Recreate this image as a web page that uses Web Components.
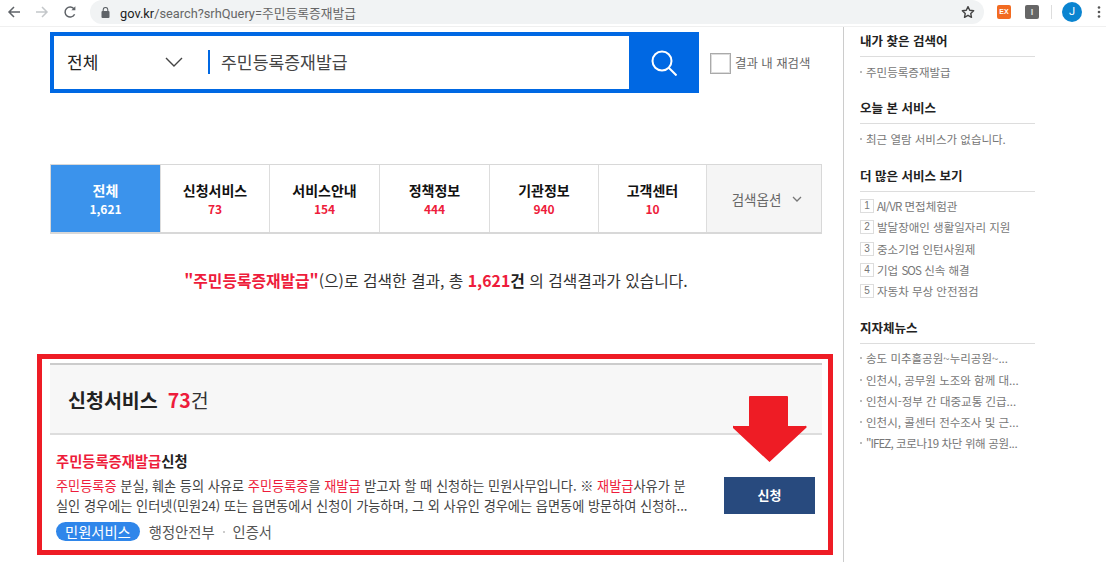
<!DOCTYPE html>
<html lang="ko">
<head>
<meta charset="utf-8">
<title>gov.kr search</title>
<style>
    html, body { margin: 0; padding: 0; height: 100%; background: #fff; overflow: hidden; }
    body { font-family: "Noto Sans CJK KR", "Noto Sans", sans-serif; color: #222; }
    .page { display: flex; align-items: flex-start; }
    .tight { letter-spacing: -0.9px; }
    .snug { letter-spacing: -0.35px; }
</style>
</head>
<body>
<browser-bar url-host="gov.kr" url-path="/search?srhQuery=주민등록증재발급"></browser-bar>
<div class="page">
    <main-column>
        <search-box query="주민등록증재발급" scope="전체"></search-box>
        <result-tabs></result-tabs>
        <result-summary></result-summary>
        <service-result></service-result>
    </main-column>
    <side-column>
        <side-section heading="내가 찾은 검색어"><side-item>주민등록증재발급</side-item></side-section>
        <side-section heading="오늘 본 서비스"><side-item>최근 열람 서비스가 없습니다.</side-item></side-section>
        <side-section heading="더 많은 서비스 보기">
            <side-item num="1"><span class="tight">AI/VR</span> 면접체험관</side-item>
            <side-item num="2">발달장애인 생활일자리 지원</side-item>
            <side-item num="3">중소기업 인턴사원제</side-item>
            <side-item num="4">기업 <span class="tight">SOS</span> 신속 해결</side-item>
            <side-item num="5">자동차 무상 안전점검</side-item>
        </side-section>
        <side-section heading="지자체뉴스">
            <side-item>송도 미추홀공원~누리공원~...</side-item>
            <side-item>인천시, 공무원 노조와 함께 대...</side-item>
            <side-item>인천시-정부 간 대중교통 긴급...</side-item>
            <side-item>인천시, 콜센터 전수조사 및 근...</side-item>
            <side-item><span class="tight">"IFEZ,</span> <span class="snug">코로나19 차단 위해 공원...</span></side-item>
        </side-section>
    </side-column>
</div>

<script>
const FONT = '"Noto Sans CJK KR", "Noto Sans", sans-serif';

class BrowserBar extends HTMLElement {
    connectedCallback() {
        this.attachShadow({ mode: 'open' });
        this.shadowRoot.innerHTML = `
            <style>
                :host { display: flex; align-items: flex-start; height: 27px; background: #fff; border-bottom: 1px solid #f0f0f0; box-sizing: border-box; }
                svg { display: block; flex: none; }
                .nav { display: flex; align-items: center; height: 24px; padding-left: 7px; gap: 14px; width: 90px; flex: none; box-sizing: border-box; }
                .pill { flex: none; width: 894px; height: 24px; background: #f1f3f4; border-radius: 12px; display: flex; align-items: center; padding-left: 11px; box-sizing: border-box; font: 12.8px "Roboto", "Noto Sans CJK KR", sans-serif; color: #666; }
                .pill b { font-weight: 400; color: #222; }
                .pill svg { margin-right: 10px; }
                .pill .star { margin-left: auto; margin-right: 9px; }
                .tools { display: flex; align-items: center; height: 24px; padding-left: 13px; }
                .ex { width: 14px; height: 14px; border-radius: 2px; background: #f26b21; color: #fff; font: bold 7px/14px "Liberation Sans", sans-serif; text-align: center; }
                .i { width: 14px; height: 14px; border-radius: 2px; background: #666; color: #ddd; font: bold 9px/14px "Liberation Sans", sans-serif; text-align: center; margin-left: 14px; }
                .sep { width: 1px; height: 14px; background: #ddd; margin-left: 12px; }
                .j { width: 20px; height: 20px; border-radius: 50%; background: #0a84d0; color: #fff; font: 11px/20px "Roboto", sans-serif; text-align: center; margin-left: 10px; }
                .dots { margin-left: 15px; }
            </style>
            <div class="nav">
                <svg width="14" height="14" viewBox="0 0 14 14" fill="none" stroke="#5f6368" stroke-width="1.5"><path d="M13 7H2M7 2 2 7l5 5"/></svg>
                <svg width="14" height="14" viewBox="0 0 14 14" fill="none" stroke="#c4c7ca" stroke-width="1.5"><path d="M1 7h11M7 2l5 5-5 5"/></svg>
                <svg width="14" height="14" viewBox="0 0 14 14" fill="none" stroke="#5f6368" stroke-width="1.5"><path d="M11.6 9.2A5 5 0 1 1 11.2 4.2"/><path d="M12.4 1.2v4h-4z" fill="#5f6368" stroke="none"/></svg>
            </div>
            <div class="pill">
                <svg width="9" height="11" viewBox="0 0 9 11" fill="#5f6368"><rect x="0.5" y="4" width="8" height="7" rx="1"/><path d="M2.2 4V2.8a2.3 2.3 0 0 1 4.6 0V4" fill="none" stroke="#5f6368" stroke-width="1.1"/></svg>
                <span><b>${this.getAttribute('url-host')}</b>${this.getAttribute('url-path')}</span>
                <svg class="star" width="14" height="14" viewBox="0 0 24 24" fill="none" stroke="#444" stroke-width="2.4" stroke-linejoin="round"><path d="M12 2.8l2.9 6.2 6.8.8-5 4.6 1.3 6.7-6-3.4-6 3.4 1.3-6.7-5-4.6 6.8-.8z"/></svg>
            </div>
            <div class="tools">
                <div class="ex">EX</div>
                <div class="i">I</div>
                <div class="sep"></div>
                <div class="j">J</div>
                <svg class="dots" width="4" height="14" viewBox="0 0 4 14" fill="#555"><circle cx="2" cy="2.5" r="1.3"/><circle cx="2" cy="7" r="1.3"/><circle cx="2" cy="11.5" r="1.3"/></svg>
            </div>`;
    }
}
customElements.define('browser-bar', BrowserBar);

class MainColumn extends HTMLElement {
    connectedCallback() {
        this.attachShadow({ mode: 'open' });
        this.shadowRoot.innerHTML = `
            <style>
                :host { display: block; width: 844px; height: 535px; flex: none; box-sizing: border-box; padding: 5px 21px 0 50px; border-right: 1px solid #ccc; }
            </style>
            <slot></slot>`;
    }
}
customElements.define('main-column', MainColumn);

class SearchBox extends HTMLElement {
    connectedCallback() {
        this.attachShadow({ mode: 'open' });
        this.shadowRoot.innerHTML = `
            <style>
                :host { display: flex; align-items: center; height: 61px; font-family: ${FONT}; }
                .box { display: flex; width: 649px; height: 61px; box-sizing: border-box; border: 4px solid #0068e3; border-right: 0; flex: none; }
                .scope { width: 150px; display: flex; align-items: center; justify-content: space-between; box-sizing: border-box; padding: 0 21px 2px 13px; font-size: 17px; color: #222; flex: none; }
                .field { flex: 1; display: flex; align-items: center; font-size: 17.200px; color: #444; padding-bottom: 2px; }
                .field::before { content: ""; width: 2px; height: 24px; background: #0068e3; margin: 0 11px 0 4px; }
                .go { width: 70px; background: #0068e3; display: flex; align-items: center; justify-content: center; margin: -4px 0; flex: none; }
                .again { display: flex; align-items: center; margin-left: 11px; font-size: 12.4px; color: #666; }
                .check { width: 19px; height: 19px; border: 1px solid #aaa; box-shadow: inset 0 0 0 1px #ddd; margin-right: 4px; margin-top: 1px; }
            </style>
            <div class="box">
                <div class="scope">
                    <span>${this.getAttribute('scope')}</span>
                    <svg width="18" height="10" viewBox="0 0 18 10" fill="none" stroke="#444" stroke-width="1.4"><path d="M1 1l8 8 8-8"/></svg>
                </div>
                <div class="field">${this.getAttribute('query')}</div>
                <div class="go">
                    <svg width="26" height="26" viewBox="0 0 26 26" fill="none" stroke="#fff" stroke-width="2"><circle cx="11" cy="11" r="9.500"/><path d="M17.500 17.500l8 8"/></svg>
                </div>
            </div>
            <div class="again"><span class="check"></span>결과 내 재검색</div>`;
    }
}
customElements.define('search-box', SearchBox);

class ResultTabs extends HTMLElement {
    connectedCallback() {
        const tabs = [
            ['전체', '1,621', 110], ['신청서비스', '73', 109], ['서비스안내', '154', 110],
            ['정책정보', '444', 110], ['기관정보', '940', 109], ['고객센터', '10', 108]
        ];
        this.attachShadow({ mode: 'open' });
        this.shadowRoot.innerHTML = `
            <style>
                :host { display: flex; height: 70px; margin-top: 71px; width: 772px; box-sizing: border-box; border: 1px solid #d8d8d8; border-bottom-width: 2px; font-family: ${FONT}; }
                .tab { box-sizing: border-box; border-right: 1px solid #ddd; text-align: center; display: flex; flex-direction: column; justify-content: center; flex: none; font-weight: 700; font-size: 14px; line-height: 19px; color: #111; padding-top: 1px; }
                .tab span { color: #ee1c3b; font-size: 12px; line-height: 18px; font-weight: 700; }
                .tab.on { background: #3b93ec; color: #fff; }
                .tab.on span { color: #fff; }
                .opt { flex: 1; background: #f5f5f5; display: flex; align-items: center; justify-content: center; gap: 11px; font-size: 13.5px; color: #666; padding-left: 6px; }
            </style>
            ${tabs.map((t, i) => `<div class="tab ${i === 0 ? 'on' : ''}" style="width:${t[2]}px">${t[0]}<span>${t[1]}</span></div>`).join('')}
            <div class="opt">검색옵션
                <svg width="10" height="6" viewBox="0 0 10 6" fill="none" stroke="#777" stroke-width="1.3"><path d="M1 1l4 4 4-4"/></svg>
            </div>`;
    }
}
customElements.define('result-tabs', ResultTabs);

class ResultSummary extends HTMLElement {
    connectedCallback() {
        this.attachShadow({ mode: 'open' });
        this.shadowRoot.innerHTML = `
            <style>
                :host { display: block; width: 772px; margin-top: 35px; height: 24px; text-align: center; font: 15.8px/24px ${FONT}; color: #333; }
                b { font-weight: 700; color: #ee1c3b; }
                strong { font-weight: 700; color: #222; }
            </style>
            <b>"주민등록증재발급"</b>(으)로 검색한 결과, 총 <b>1,621</b><strong>건</strong> 의 검색결과가 있습니다.`;
    }
}
customElements.define('result-summary', ResultSummary);

class ServiceResult extends HTMLElement {
    connectedCallback() {
        this.attachShadow({ mode: 'open' });
        this.shadowRoot.innerHTML = `
            <style>
                :host { display: block; position: relative; width: 772px; margin-top: 70px; font-family: ${FONT}; }
                .head { height: 72px; box-sizing: border-box; background: #f7f7f7; border-top: 2px solid #ccc; border-bottom: 2px solid #ddd; display: flex; align-items: center; padding-left: 18px; font-size: 19.5px; color: #333; }
                .head strong { font-weight: 700; color: #222; margin-right: 10px; }
                .head b { font-weight: 700; color: #ee1c3b; }
                .body { display: flex; align-items: flex-start; padding: 14px 7px 0 6px; }
                .text { flex: 1; min-width: 0; }
                h3 { margin: 0 0 3px; font-size: 14.3px; line-height: 24px; font-weight: 700; color: #222; }
                h3 em, p em { font-style: normal; color: #ee1c3b; }
                p { margin: 0; font-size: 13.18px; line-height: 20px; color: #444; white-space: nowrap; }
                .meta { display: flex; align-items: center; font-size: 14.3px; line-height: 19px; color: #555; margin-top: 6px; }
                .pill { background: #2f86ea; color: #fff; height: 19px; line-height: 19px; padding: 0 9px; border-radius: 10px; margin-right: 9px; }
                .dot { width: 2px; height: 2px; background: #ccc; margin: 0 8px 0 8px; }
                .apply { width: 91px; height: 37px; background: #284a7e; color: #fff; font-size: 13px; font-weight: 700; text-align: center; line-height: 36px; margin-top: 28px; flex: none; }
                /* annotation drawn over the screenshot */
                .mark { position: absolute; left: -13px; top: -9px; width: 796px; height: 201px; box-sizing: border-box; border: 5px solid #ee1c25; pointer-events: none; }
                .arrow { position: absolute; left: 683px; top: 32px; }
            </style>
            <div class="head"><strong>신청서비스</strong><b>73</b>건</div>
            <div class="body">
                <div class="text">
                    <h3><em>주민등록증재발급</em>신청</h3>
                    <p><em>주민등록증</em> 분실, 훼손 등의 사유로 <em>주민등록증</em>을 <em>재발급</em> 받고자 할 때 신청하는 민원사무입니다. ※ <em>재발급</em>사유가 분<br>실인 경우에는 인터넷(민원24) 또는 읍면동에서 신청이 가능하며, 그 외 사유인 경우에는 읍면동에 방문하여 신청하...</p>
                    <div class="meta"><span class="pill">민원서비스</span>행정안전부<span class="dot"></span>인증서</div>
                </div>
                <div class="apply">신청</div>
            </div>
            <div class="mark"></div>
            <svg class="arrow" width="74" height="67" viewBox="0 0 74 67" fill="#ee1c25"><path d="M16 2a1 1 0 0 1 1-1h37a1 1 0 0 1 1 1v29h17a1 1 0 0 1 1 2L36.500 67 0 33a1 1 0 0 1 1-2h15z"/></svg>`;
    }
}
customElements.define('service-result', ServiceResult);

class SideColumn extends HTMLElement {
    connectedCallback() {
        this.attachShadow({ mode: 'open' });
        this.shadowRoot.innerHTML = `
            <style>
                :host { display: block; width: 175px; margin-left: 16px; flex: none; font-family: ${FONT}; }
            </style>
            <slot></slot>`;
    }
}
customElements.define('side-column', SideColumn);

class SideSection extends HTMLElement {
    connectedCallback() {
        this.attachShadow({ mode: 'open' });
        this.shadowRoot.innerHTML = `
            <style>
                :host { display: block; margin-bottom: 12px; }
                h4 { margin: 0 0 4px; height: 30px; box-sizing: border-box; border-bottom: 1px solid #ddd; font-size: 12.5px; line-height: 28px; font-weight: 700; color: #222; }
            </style>
            <h4>${this.getAttribute('heading')}</h4>
            <slot></slot>`;
    }
}
customElements.define('side-section', SideSection);

class SideItem extends HTMLElement {
    connectedCallback() {
        const num = this.getAttribute('num');
        this.attachShadow({ mode: 'open' });
        this.shadowRoot.innerHTML = `
            <style>
                :host { display: flex; align-items: center; height: 21.25px; font-size: 11.5px; color: #777; white-space: pre; }
                .bullet { width: 2px; height: 2px; background: #bbb; margin-right: 4px; flex: none; }
                .num { width: 12px; height: 12px; border: 1px solid #ddd; font: 10px/12px "Liberation Sans", sans-serif; text-align: center; color: #777; margin-right: 3px; flex: none; }
                .label { display: block; }
            </style>
            ${num ? `<span class="num">${num}</span>` : '<span class="bullet"></span>'}
            <span class="label"><slot></slot></span>`;
    }
}
customElements.define('side-item', SideItem);
</script>
</body>
</html>
